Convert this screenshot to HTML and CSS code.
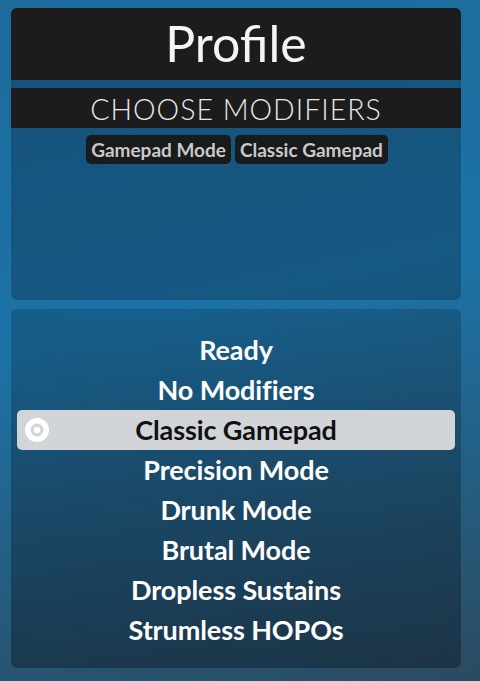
FILE: index.html
```html
<!DOCTYPE html>
<html lang="en">
<head>
<meta charset="utf-8">
<title>Profile</title>
<link rel="stylesheet" href="styles.css">
</head>
<body>
<div class="screen">
  <section class="panel panel-top">
    <header class="title-bar"><h1>Profile</h1></header>
    <div class="subtitle-bar"><h2>CHOOSE MODIFIERS</h2></div>
    <div class="chips">
      <span class="chip">Gamepad Mode</span>
      <span class="chip">Classic Gamepad</span>
    </div>
  </section>
  <section class="panel panel-list">
    <ul class="menu">
      <li class="menu-item">Ready</li>
      <li class="menu-item">No Modifiers</li>
      <li class="menu-item is-selected">
        <svg class="radio" viewBox="0 0 24 24" width="24" height="24">
          <circle cx="12" cy="12" r="12" fill="#ffffff"/>
          <circle cx="12" cy="12" r="6.5" fill="#d2d5d8"/>
          <circle cx="12" cy="12" r="3.3" fill="#ffffff"/>
        </svg>
        Classic Gamepad
      </li>
      <li class="menu-item">Precision Mode</li>
      <li class="menu-item">Drunk Mode</li>
      <li class="menu-item">Brutal Mode</li>
      <li class="menu-item">Dropless Sustains</li>
      <li class="menu-item">Strumless HOPOs</li>
    </ul>
  </section>
</div>
</body>
</html>
```
FILE: styles.css
```css
html, body {
  margin: 0;
  padding: 0;
  height: 100%;
}

body {
  font-family: Lato, "Open Sans", sans-serif;
  background: linear-gradient(168deg, #1d6a9b 0%, #1c73a7 45%, #245d80 75%, #2c4a60 100%);
  color: #ffffff;
  overflow: hidden;
}

.screen {
  display: flex;
  flex-direction: column;
  gap: 9px;
  padding: 8px 19px 0 11px;
}

.panel {
  border-radius: 6px;
  background: rgba(8, 28, 48, 0.3);
  overflow: hidden;
}

.panel-top {
  height: 292px;
}

.title-bar {
  height: 72px;
  background: #1c1c1c;
  display: flex;
  align-items: center;
  justify-content: center;
}

.title-bar h1 {
  margin: 0;
  font-weight: 400;
  font-size: 50px;
  line-height: 1;
  color: #f4f4f4;
  position: relative;
  top: -1px;
}

.subtitle-bar {
  margin-top: 8px;
  height: 40px;
  background: #1c1c1c;
  display: flex;
  align-items: center;
  justify-content: center;
}

.subtitle-bar h2 {
  margin: 0;
  font-weight: 300;
  font-size: 28.5px;
  letter-spacing: 1px;
  line-height: 1;
  color: #e8e8e8;
  position: relative;
  top: 1px;
}

.chips {
  display: flex;
  justify-content: center;
  gap: 4px;
  margin-top: 7px;
  padding-left: 2px;
}

.chip {
  background: #191a1c;
  color: #c9c9c9;
  font-weight: 700;
  font-size: 19px;
  line-height: 29px;
  height: 29px;
  padding: 0 5px;
  border-radius: 5px;
}

.panel-list {
  height: 359px;
  background: linear-gradient(180deg, rgba(8, 28, 48, 0.24) 0%, rgba(10, 22, 34, 0.44) 100%);
}

.menu {
  list-style: none;
  margin: 0;
  padding: 21px 6px 0;
}

.menu-item {
  position: relative;
  height: 40px;
  display: flex;
  align-items: center;
  justify-content: center;
  font-weight: 700;
  font-size: 27px;
  letter-spacing: -0.1px;
  color: #ffffff;
  padding-bottom: 1px;
  box-sizing: border-box;
}

.menu-item.is-selected {
  background: #d2d5d8;
  color: #111111;
  border-radius: 5px;
}

.radio {
  position: absolute;
  left: 8px;
  top: 8px;
}
```
